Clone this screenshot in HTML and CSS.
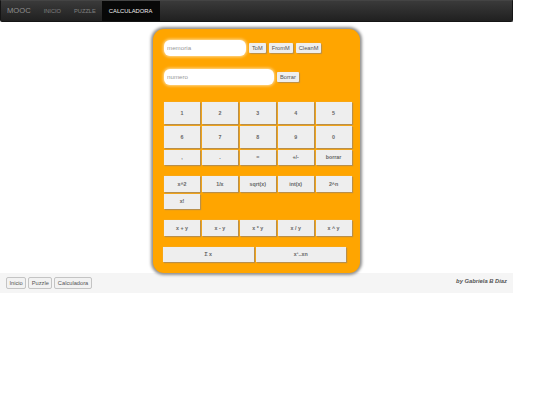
FILE: index.html
```html
<!DOCTYPE html>
<html lang="es">
<head>
<meta charset="utf-8">
<title>MOOC</title>
<link rel="stylesheet" href="styles.css">
</head>
<body>
<div class="page">
  <nav class="navbar">
    <span class="brand">MOOC</span>
    <a class="nav-link">INICIO</a>
    <a class="nav-link">PUZZLE</a>
    <a class="nav-link active">CALCULADORA</a>
  </nav>
  <main class="main">
    <section class="calc">
      <div class="input-row mem-row">
        <input class="field field-mem" placeholder="memoria">
        <button class="small">ToM</button>
        <button class="small">FromM</button>
        <button class="small">CleanM</button>
      </div>
      <div class="input-row num-row">
        <input class="field field-num" placeholder="numero">
        <button class="small">Borrar</button>
      </div>
      <div class="keys digits">
        <button class="key">1</button><button class="key">2</button><button class="key">3</button><button class="key">4</button><button class="key">5</button>
        <button class="key">6</button><button class="key">7</button><button class="key">8</button><button class="key">9</button><button class="key">0</button>
        <button class="key">,</button><button class="key">.</button><button class="key">=</button><button class="key">+/-</button><button class="key">borrar</button>
      </div>
      <div class="keys unary">
        <button class="key">x^2</button><button class="key">1/x</button><button class="key">sqrt(x)</button><button class="key">int(x)</button><button class="key">2^n</button>
        <button class="key">x!</button>
      </div>
      <div class="keys binary">
        <button class="key">x + y</button><button class="key">x - y</button><button class="key">x * y</button><button class="key">x / y</button><button class="key">x ^ y</button>
      </div>
      <div class="wide-row">
        <button class="key">Σ x</button><button class="key">x¹..xn</button>
      </div>
    </section>
  </main>
  <footer class="footer">
    <div class="foot-links">
      <button class="foot-btn">Inicio</button>
      <button class="foot-btn">Puzzle</button>
      <button class="foot-btn">Calculadora</button>
    </div>
    <em class="credit">by Gabriela B Diaz</em>
  </footer>
</div>
</body>
</html>
```
FILE: styles.css
```css
* { box-sizing: border-box; }
html, body { margin: 0; padding: 0; background: #fff; }
body { font-family: "Liberation Sans", Arial, sans-serif; height: 405px; overflow: hidden; }
.page { width: 513px; }

.navbar {
  height: 22px;
  display: flex;
  align-items: stretch;
  background: linear-gradient(#3a3a3a, #202020);
  border: 1px solid #151515;
  border-top-color: #444;
  border-radius: 0 0 2px 2px;
}
.brand { font-size: 7.6px; color: #8f8f8f; line-height: 20px; padding: 0 6.5px 0 6px; }
.nav-link { font-size: 5.7px; color: #808080; line-height: 20px; padding: 0 6.5px; }
.nav-link.active { background: #080808; color: #eee; padding: 0 7.5px 0 6.5px; font-size: 5.8px; }

.main { display: flex; justify-content: center; padding: 7px 0 0; height: 251px; }
.calc {
  width: 207px;
  height: 244px;
  background: #ffa500;
  border-radius: 11px;
  box-shadow: 0 0 3px 2px #8f8f8f;
  padding: 10px 0 0 11px;
}
.input-row { display: flex; align-items: center; gap: 3px; }
.mem-row { height: 17px; }
.num-row { height: 17px; margin-top: 12px; }
.field {
  height: 16px;
  border: none;
  border-radius: 6px;
  background: #fff;
  box-shadow: 0 0 3px 1px rgba(255,255,255,.6);
  font: 6.2px "Liberation Sans", Arial, sans-serif;
  padding: 0 3px;
  outline: none;
}
.field::placeholder { color: #999; opacity: 1; }
.field-mem { width: 82px; }
.field-num { width: 110px; }
.small {
  height: 10px;
  padding: 0 3px;
  background: #eee;
  border: none;
  box-shadow: 1px 1px 1px #b98f4a, 0 0 1px #d8b070;
  border-radius: 1px;
  font: 5.7px "Liberation Sans", Arial, sans-serif;
  color: #555;
}
.keys {
  display: grid;
  grid-template-columns: repeat(5, 36px);
  column-gap: 1.9px;
  row-gap: 2px;
  grid-auto-rows: 15.5px;
}
.digits { margin-top: 17px; grid-template-rows: 22px 21.5px 15px; }
.unary { margin-top: 11.5px; }
.binary { margin-top: 11px; }
.key {
  background: #eee;
  border: none;
  box-shadow: 1px 1px 1px #b98f4a, 0 0 1px #d8b070;
  border-radius: 0;
  font: bold 5.3px "Liberation Sans", Arial, sans-serif;
  color: #666;
  padding: 0;
}
.wide-row { display: flex; gap: 2px; margin-top: 11px; margin-left: -1px; }
.wide-row .key { width: 90.5px; height: 15px; }

.footer {
  height: 20px;
  background: #f5f5f5;
  display: flex;
  justify-content: space-between;
  align-items: flex-start;
  padding: 4px 6px 0;
}
.foot-links { display: flex; gap: 2px; }
.foot-btn {
  height: 12px;
  padding: 0 2.5px;
  background: #f2f2f2;
  border: 1px solid #c4c4c4;
  border-radius: 2px;
  font: 5.7px "Liberation Sans", Arial, sans-serif;
  color: #555;
}
.credit { font: italic bold 5.8px "Liberation Sans", Arial, sans-serif; color: #555; line-height: 9px; }
```
